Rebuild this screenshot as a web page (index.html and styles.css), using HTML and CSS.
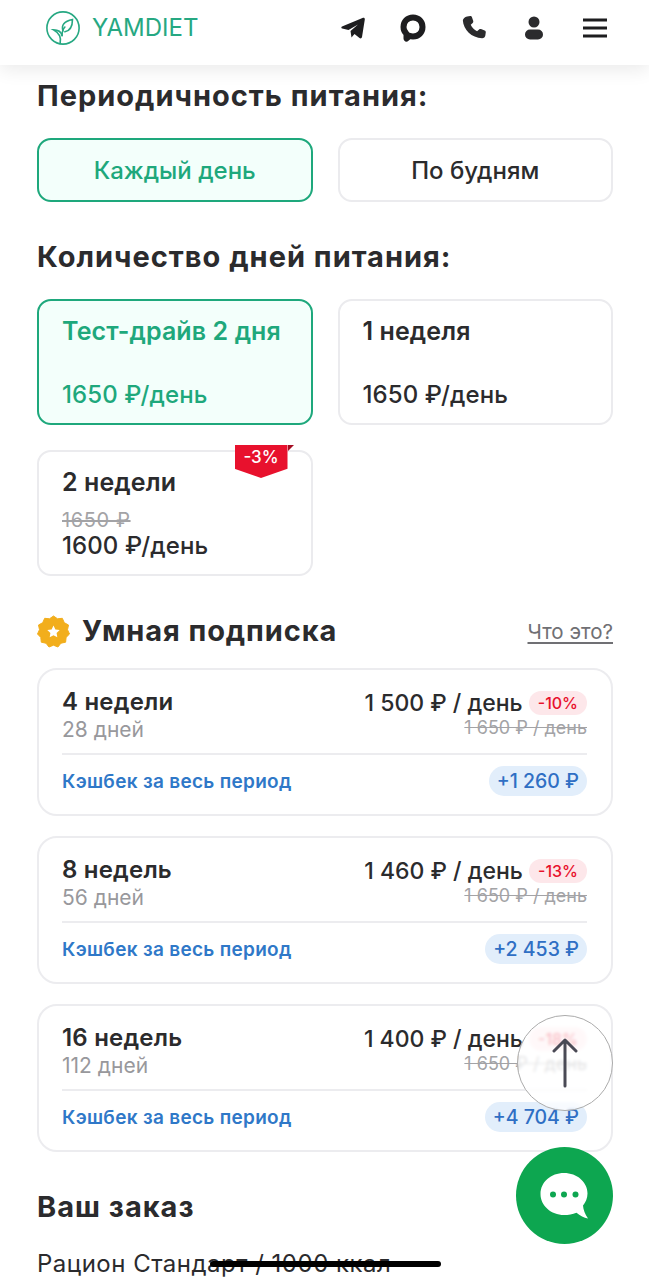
FILE: index.html
```html
<!DOCTYPE html>
<html lang="ru">
<head>
    <meta charset="UTF-8">
    <meta name="viewport" content="width=device-width, initial-scale=1.0">
    <title>YAMDIET</title>
    <link rel="stylesheet" href="styles.css">
</head>
<body>
    <div class="header">
        <a class="logo" href="#">
            <svg width="36" height="36" viewBox="0 0 38 38" fill="none" stroke="#26a882" stroke-width="1.700" stroke-linecap="round">
                <circle cx="19" cy="19" r="17"/>
                <path d="M16 35c1-6 0-10-7-14 5 0 8 2 9 6"/>
                <path d="M18 27c0-4 1-7 3-9"/>
                <path d="M19 22c-2-6 1-10 10-12 0 7-3 12-8 13"/>
            </svg>
            <span>YAMDIET</span>
        </a>
        <div class="header-icons">
            <a href="#"><svg width="24" height="22" viewBox="0 0 24 22"><path d="M1 9.500 21.500 1C23 .5 24 1.200 23.800 2.500L21 20c-.2 1.300-1.500 1.800-2.500 1L13.500 17 10.500 20.500 9.500 14 17 7.500 7.500 13 1.200 11.500C.2 11.200 0 10 1 9.500Z" fill="#1d1d1f"/></svg></a>
            <a href="#"><svg width="26" height="28" viewBox="0 0 26 28"><path d="M13 3.500c5.500 0 9.500 4 9.500 9.500s-4 9.500-9.500 9.500c-1.300 0-2.500-.2-3.500-.6L6.500 24.500v-4.800C4.500 18 3.500 15.500 3.500 13c0-5.500 4-9.500 9.500-9.500Z" fill="none" stroke="#1d1d1f" stroke-width="6" stroke-linejoin="round"/></svg></a>
            <a href="#"><svg width="26" height="26" viewBox="0 0 28 28"><path d="M6.500 1.500 10 1c1 0 1.500.5 1.800 1.300l1.400 4.200c.2.800 0 1.500-.6 2L10.500 10.500c1.300 3 3.700 5.500 6.800 7l2.200-2c.6-.5 1.300-.6 2-.4l4 1.500c.8.300 1.300 1 1.200 1.900l-.5 3.500c-.2 1.500-1.600 3-3.500 3C11.500 25 2.500 15.500 2 6c0-2.300 2.300-4.200 4.500-4.500Z" fill="#2b2b2d"/></svg></a>
            <a href="#"><svg width="20" height="24" viewBox="0 0 20 24"><circle cx="10" cy="6" r="5.500" fill="#2b2b2d"/><rect x="1" y="13.500" width="18" height="10" rx="5" fill="#2b2b2d"/></svg></a>
            <a href="#"><svg width="24" height="20" viewBox="0 0 24 20"><path d="M0 2h24M0 10h24M0 18h24" stroke="#1d1d1f" stroke-width="3"/></svg></a>
        </div>
    </div>

    <div class="content">
        <h2 class="title">Периодичность питания:</h2>
        <div class="options">
            <div class="option active short">Каждый день</div>
            <div class="option short">По будням</div>
        </div>

        <h2 class="title days-title">Количество дней питания:</h2>
        <div class="options">
            <div class="option active plan">
                <div class="plan-name">Тест-драйв 2 дня</div>
                <div class="plan-price">1650 ₽/день</div>
            </div>
            <div class="option plan">
                <div class="plan-name">1 неделя</div>
                <div class="plan-price">1650 ₽/день</div>
            </div>
            <div class="option plan">
                <div class="plan-name">2 недели</div>
                <div class="plan-bottom">
                    <div class="plan-old">1650 ₽</div>
                    <div class="plan-price">1600 ₽/день</div>
                </div>
                <div class="ribbon">-3%</div>
            </div>
        </div>

        <div class="smart-head">
            <svg class="smart-icon" width="33" height="33" viewBox="0 0 33 33">
                <path d="M16.500 1l4 2.800 4.800-.5 2 4.400 4.200 2.300-1 4.700 2 4.300-3.400 3.400-.5 4.800-4.700 1-3 3.800-4.400-1.800-4.500 1.800-3-3.800-4.700-1-.5-4.800L.5 19l2-4.300-1-4.700 4.200-2.300 2-4.400 4.800.5Z" fill="#f2ae1c" stroke="#f2ae1c" stroke-linejoin="round"/>
                <path d="m16.500 10.500 1.900 3.900 4.300.6-3.100 3 .7 4.300-3.800-2-3.800 2 .7-4.300-3.100-3 4.300-.6Z" fill="#fff"/>
            </svg>
            <h2 class="smart-title">Умная подписка</h2>
            <a class="smart-link" href="#">Что это?</a>
        </div>

        <div class="sub-card">
            <div class="sub-top">
                <div>
                    <div class="sub-name">4 недели</div>
                    <div class="sub-days">28 дней</div>
                </div>
                <div class="sub-prices">
                    <div class="sub-price">1 500 ₽ / день <span class="sale">-10%</span></div>
                    <div class="sub-old">1 650 ₽ / день</div>
                </div>
            </div>
            <div class="sub-bottom">
                <span class="cashback-label">Кэшбек за весь период</span>
                <span class="cashback">+1 260 ₽</span>
            </div>
        </div>

        <div class="sub-card">
            <div class="sub-top">
                <div>
                    <div class="sub-name">8 недель</div>
                    <div class="sub-days">56 дней</div>
                </div>
                <div class="sub-prices">
                    <div class="sub-price">1 460 ₽ / день <span class="sale">-13%</span></div>
                    <div class="sub-old">1 650 ₽ / день</div>
                </div>
            </div>
            <div class="sub-bottom">
                <span class="cashback-label">Кэшбек за весь период</span>
                <span class="cashback">+2 453 ₽</span>
            </div>
        </div>

        <div class="sub-card">
            <div class="sub-top">
                <div>
                    <div class="sub-name">16 недель</div>
                    <div class="sub-days">112 дней</div>
                </div>
                <div class="sub-prices">
                    <div class="sub-price">1 400 ₽ / день <span class="sale">-18%</span></div>
                    <div class="sub-old">1 650 ₽ / день</div>
                </div>
            </div>
            <div class="sub-bottom">
                <span class="cashback-label">Кэшбек за весь период</span>
                <span class="cashback">+4 704 ₽</span>
            </div>
        </div>

        <h2 class="title order-title">Ваш заказ</h2>
        <div class="order-line">Рацион Стандарт / 1000 ккал</div>
    </div>

    <a class="scroll-up" href="#">
        <svg width="26" height="50" viewBox="0 0 26 50" fill="none" stroke="#4a4a55" stroke-width="3" stroke-linecap="round" stroke-linejoin="round"><path d="M13 48V2M2 13 13 2l11 11"/></svg>
    </a>
    <a class="chat" href="#">
        <svg width="50" height="50" viewBox="0 0 50 50"><path d="M24 2C37 2 47.500 11 47.500 22.500c0 5-2 9-4.500 12 .3 4 2 9 5 13-4-.5-8-3-11.500-5.800-4 1.500-8 2.300-12.500 2.300C11 44 .5 34.500.5 23 .5 11 11 2 24 2Z" fill="#fff"/><circle cx="13" cy="23.500" r="3" fill="#0da650"/><circle cx="24" cy="23.500" r="3" fill="#0da650"/><circle cx="35.500" cy="23.500" r="3" fill="#0da650"/></svg>
    </a>
    <div class="home-bar"></div>
</body>
</html>
```

FILE: styles.css
```css
html, body {
    margin: 0;
    height: 1280px;
    overflow: hidden;
}
body {
    position: relative;
    font-family: Inter, "Noto Sans", sans-serif;
    color: #2b2b2d;
    background: white;
}
a {
    color: inherit;
    text-decoration: none;
}
.header {
    height: 65px;
    box-sizing: border-box;
    padding: 0 24px 10px 45px;
    display: flex;
    justify-content: space-between;
    align-items: center;
    background: white;
    box-shadow: 0 4px 18px rgba(0, 0, 0, 0.09);
}
.logo {
    display: flex;
    align-items: center;
    gap: 11px;
    color: #26a882;
    font-size: 24px;
}
.header-icons {
    display: flex;
    align-items: center;
}
.header-icons a {
    width: 60.500px;
    display: flex;
    justify-content: center;
}
.content {
    padding: 13px 36px 0 37px;
}
.title {
    margin: 0;
    font-size: 29px;
    line-height: 36px;
    font-weight: 700;
    letter-spacing: 1px;
}
.options {
    display: grid;
    grid-template-columns: 1fr 1fr;
    gap: 25px;
    margin-top: 24px;
}
.option {
    position: relative;
    box-sizing: border-box;
    border: 2px solid #ebebee;
    border-radius: 14px;
    background: white;
}
.option.active {
    border-color: #1ea87c;
    background: #f3fffb;
    color: #1ea87c;
}
.short {
    height: 64px;
    display: flex;
    align-items: center;
    justify-content: center;
    font-size: 24px;
    font-weight: 500;
}
.days-title {
    margin-top: 37px;
}
.plan {
    height: 126px;
    padding: 14px 23px 12px;
    display: flex;
    flex-direction: column;
    justify-content: space-between;
}
.plan-name {
    font-size: 25px;
    line-height: 32px;
    font-weight: 600;
    letter-spacing: 0.1px;
}
.plan-price {
    font-size: 24px;
    line-height: 32px;
    font-weight: 500;
    letter-spacing: 0.1px;
}
.plan-old {
    font-size: 20px;
    line-height: 20px;
    letter-spacing: 0.6px;
    color: #a3a3a6;
    text-decoration: line-through;
}
.ribbon {
    position: absolute;
    top: -7px;
    right: 23px;
    width: 53px;
    height: 33px;
    padding-top: 2px;
    box-sizing: border-box;
    text-align: center;
    font-size: 17px;
    font-weight: 500;
    color: white;
    z-index: 0;
}
.ribbon::before {
    content: "";
    position: absolute;
    inset: 0;
    z-index: -1;
    background: #e8112d;
    clip-path: polygon(0 0, 100% 0, 100% 72%, 50% 100%, 0 72%);
}
.ribbon::after {
    content: "";
    position: absolute;
    top: 0;
    right: -6px;
    border-left: 6px solid #a50d22;
    border-bottom: 6px solid transparent;
}
.smart-head {
    display: flex;
    align-items: center;
    margin-top: 37px;
}
.smart-icon {
    margin-right: 12px;
}
.smart-title {
    margin: 0;
    flex: 1;
    font-size: 29px;
    line-height: 36px;
    font-weight: 700;
    letter-spacing: 0.9px;
}
.smart-link {
    font-size: 20.500px;
    color: #707074;
    text-decoration: underline;
    text-underline-offset: 3px;
}
.sub-card {
    box-sizing: border-box;
    height: 148px;
    margin-top: 20px;
    padding: 18px 24px 0 23px;
    border: 2px solid #ececef;
    border-radius: 20px;
}
.smart-head + .sub-card {
    margin-top: 19px;
}
.sub-top {
    display: flex;
    justify-content: space-between;
    height: 65px;
    border-bottom: 2px solid #ececef;
}
.sub-name {
    font-size: 24px;
    line-height: 28px;
    font-weight: 600;
    letter-spacing: 0.2px;
}
.sub-days {
    font-size: 21px;
    line-height: 28px;
    color: #98989c;
}
.sub-prices {
    padding-top: 1px;
    text-align: right;
}
.sub-price {
    font-size: 23px;
    line-height: 28px;
    font-weight: 500;
}
.sale {
    display: inline-block;
    padding: 0 9px;
    border-radius: 12px;
    font-size: 16px;
    line-height: 24px;
    font-weight: 500;
    color: #e8112d;
    background: #fde7ea;
    vertical-align: 2px;
}
.sub-old {
    font-size: 18px;
    line-height: 22px;
    color: #a3a3a6;
    text-decoration: line-through;
}
.sub-bottom {
    display: flex;
    justify-content: space-between;
    align-items: center;
    margin-top: 11px;
}
.cashback-label {
    font-size: 19px;
    font-weight: 600;
    letter-spacing: 0.3px;
    color: #2f78c8;
}
.cashback {
    padding: 2px 8px;
    border-radius: 15px;
    font-size: 19.500px;
    line-height: 26px;
    font-weight: 500;
    color: #2f6fc4;
    background: #e2eefb;
}
.order-title {
    margin-top: 37px;
}
.order-line {
    margin-top: 24px;
    font-size: 24px;
    line-height: 30px;
    letter-spacing: 0.5px;
}
.scroll-up {
    position: absolute;
    left: 517px;
    top: 1015px;
    width: 96px;
    height: 96px;
    box-sizing: border-box;
    border: 1px solid #aaaaaa;
    border-radius: 50%;
    display: flex;
    align-items: center;
    justify-content: center;
    background: rgba(255, 255, 255, 0.72);
    backdrop-filter: blur(1.500px);
}
.chat {
    position: absolute;
    left: 516px;
    top: 1147px;
    width: 97px;
    height: 97px;
    border-radius: 50%;
    display: flex;
    align-items: center;
    justify-content: center;
    background: #0da650;
}
.home-bar {
    position: absolute;
    left: 210px;
    top: 1261px;
    width: 231px;
    height: 6px;
    border-radius: 3px;
    background: black;
}
```
